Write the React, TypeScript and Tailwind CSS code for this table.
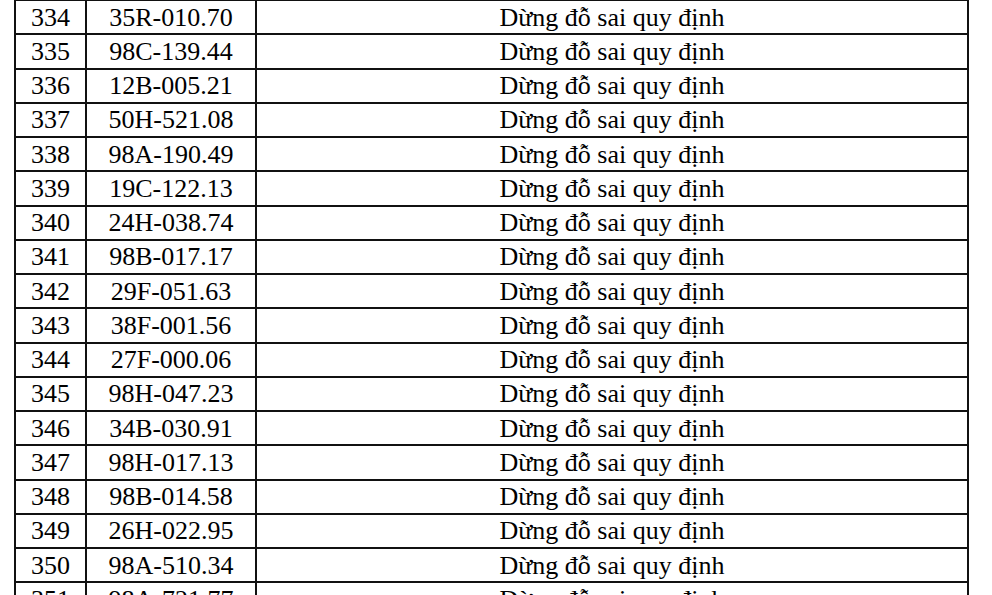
const rows: [string, string][] = [
  ["334", "35R-010.70"],
  ["335", "98C-139.44"],
  ["336", "12B-005.21"],
  ["337", "50H-521.08"],
  ["338", "98A-190.49"],
  ["339", "19C-122.13"],
  ["340", "24H-038.74"],
  ["341", "98B-017.17"],
  ["342", "29F-051.63"],
  ["343", "38F-001.56"],
  ["344", "27F-000.06"],
  ["345", "98H-047.23"],
  ["346", "34B-030.91"],
  ["347", "98H-017.13"],
  ["348", "98B-014.58"],
  ["349", "26H-022.95"],
  ["350", "98A-510.34"],
  ["351", "98A-721.77"],
];

export default function App() {
  return (
    <div className="w-[992px] h-[595px] overflow-hidden bg-white pl-[14px]">
      <table
        className="mt-[-1px] w-[955px] border-collapse text-[26px] leading-none text-black"
        style={{ fontFamily: '"Liberation Serif", "Times New Roman", serif' }}
      >
        <tbody>
          {rows.map(([no, plate]) => (
            <tr key={no} className="h-[34.25px]">
              <td className="w-[71px] border-2 border-[#111] text-center align-middle pt-[1px]">{no}</td>
              <td className="w-[170px] border-2 border-[#111] text-center align-middle pt-[1px]">{plate}</td>
              <td className="border-2 border-[#111] text-center align-middle pt-[1px]">Dừng đỗ sai quy định</td>
            </tr>
          ))}
        </tbody>
      </table>
    </div>
  );
}
